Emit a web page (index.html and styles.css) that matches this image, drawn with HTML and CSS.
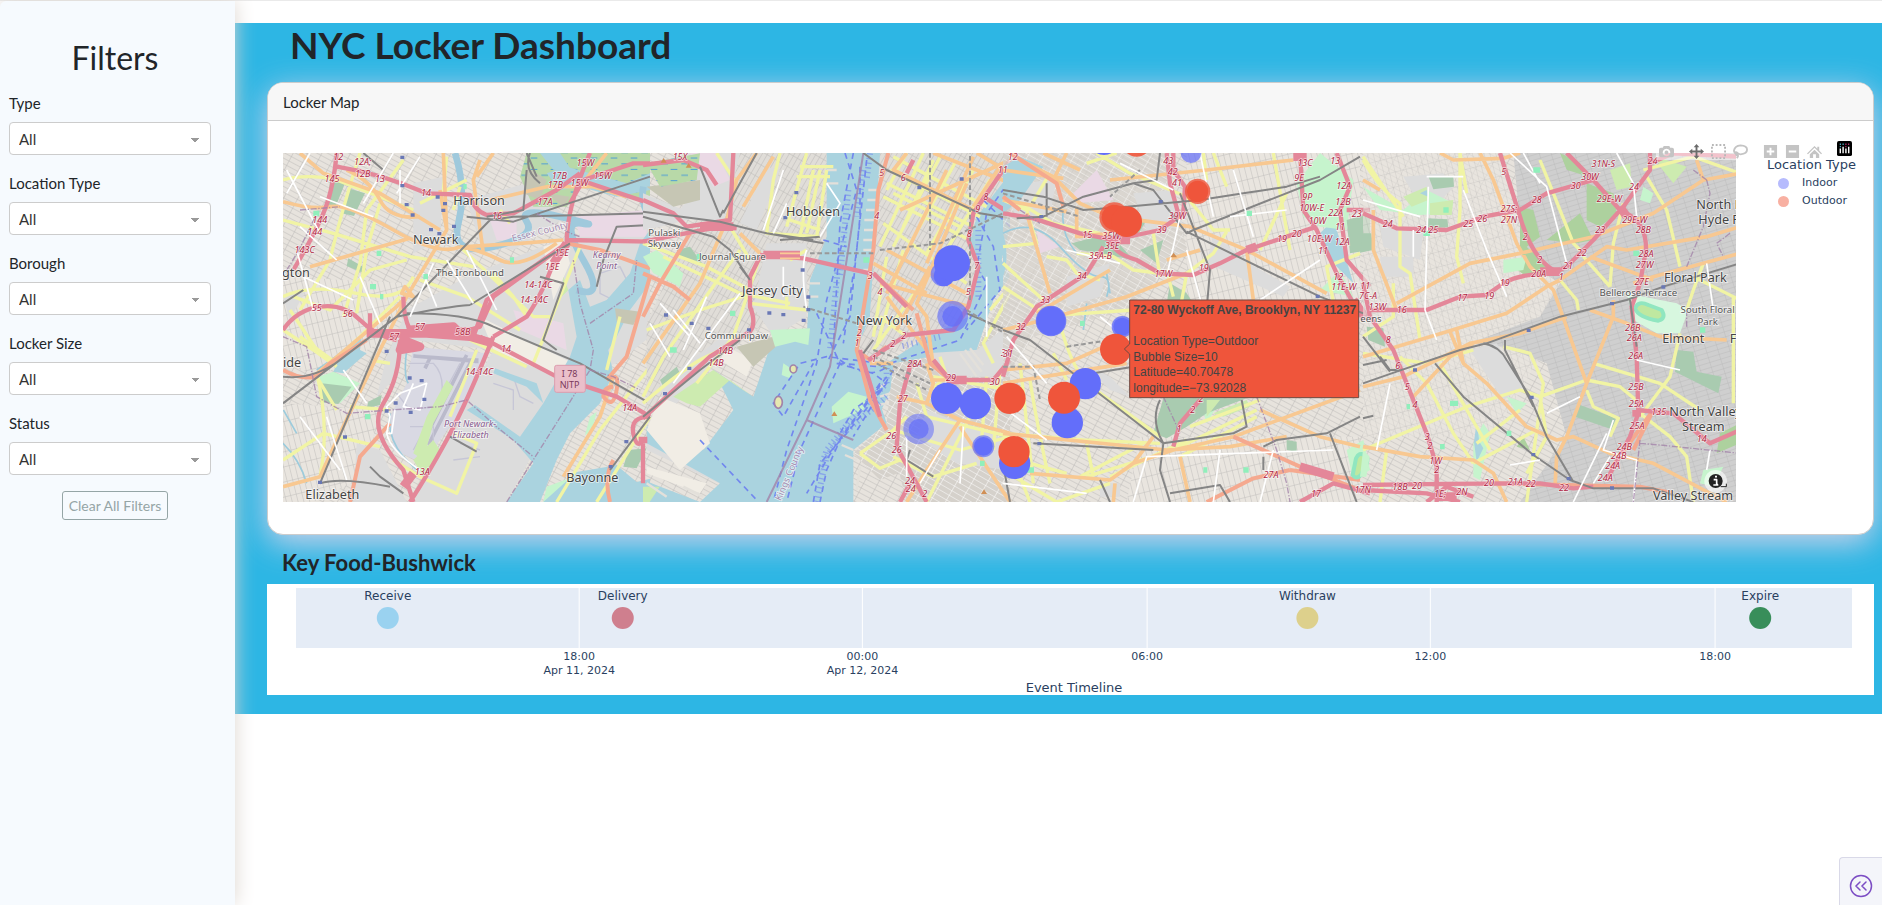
FILE: index.html
```html
<!DOCTYPE html>
<html lang="en">
<head>
<meta charset="utf-8">
<title>NYC Locker Dashboard</title>
<link rel="stylesheet" href="styles.css">
</head>
<body>
<div class="app">
  <aside class="sidebar">
    <h2 class="sidebar-title">Filters</h2>
    <div class="field"><label for="type">Type</label><select id="type"><option>All</option></select></div>
    <div class="field"><label for="loc">Location Type</label><select id="loc"><option>All</option></select></div>
    <div class="field"><label for="boro">Borough</label><select id="boro"><option>All</option></select></div>
    <div class="field"><label for="size">Locker Size</label><select id="size"><option>All</option></select></div>
    <div class="field"><label for="status">Status</label><select id="status"><option>All</option></select></div>
    <button class="clear" type="button">Clear All Filters</button>
  </aside>
  <main class="main">
    <h1 class="title">NYC Locker Dashboard</h1>
    <section class="card">
      <header class="card-header">Locker Map</header>
      <div class="card-body">
        <svg class="map" viewBox="9 9 4359 1047" preserveAspectRatio="xMinYMid slice" role="img" aria-label="Locker map">
          <defs>
            <pattern id="g1" width="38" height="15" patternUnits="userSpaceOnUse" patternTransform="rotate(28)"><rect width="38" height="15" fill="#e7e3dd"/><path d="M0 0H38M0 0V15" stroke="#bdbbb9" stroke-width="3"/></pattern>
            <pattern id="g2" width="17" height="44" patternUnits="userSpaceOnUse" patternTransform="rotate(-14)"><rect width="17" height="44" fill="#e9e5df"/><path d="M0 0H17M0 0V44" stroke="#c0bebb" stroke-width="3"/></pattern>
            <pattern id="g3" width="34" height="15" patternUnits="userSpaceOnUse" patternTransform="rotate(-17)"><rect width="34" height="15" fill="#cfcfcf"/><path d="M0 0H34M0 0V15" stroke="#b3b3b3" stroke-width="2"/></pattern>
            <pattern id="g4" width="40" height="16" patternUnits="userSpaceOnUse" patternTransform="rotate(30)"><rect width="40" height="16" fill="#d5d1cb"/><path d="M0 0H40M0 0V16" stroke="#fff" stroke-width="3"/></pattern>
            <pattern id="g5" width="14" height="36" patternUnits="userSpaceOnUse" patternTransform="rotate(30)"><rect width="14" height="36" fill="#e0ddd8"/><path d="M0 0H14M0 0V36" stroke="#bdbbb8" stroke-width="3"/></pattern>
            <pattern id="marsh" width="60" height="34" patternUnits="userSpaceOnUse"><rect width="60" height="34" fill="#b8d9a8"/><path d="M4 8H24M32 24H52" stroke="#4a9bd8" stroke-width="3"/></pattern>
          </defs>
          <rect x="9" y="9" width="4359" height="1047" fill="url(#g1)"/>

          <!-- Newark, Elizabeth, Kearny -->
          <g>
            <path fill="url(#g2)" d="M9 380L380 400 330 560 120 680 9 640ZM9 760L300 780 250 980 100 1056H9Z"/>
            <path class="ind" d="M380 480L560 380 860 260 1110 230V560L1010 640 880 680 830 780 680 1056H400L640 600 400 570 330 700 290 740 320 620ZM560 150L740 100 860 200 700 300 600 280ZM230 880L300 900 380 1056H220ZM400 100l90-20-10 190-80 40zM9 440l70-20-50 90z"/>
            <path class="pink" d="M700 480L850 520 860 600 720 540ZM880 200L1100 180V260H900ZM630 210h80v60h-60z"/>
            <path class="sand" d="M600 500l120 60 240 120-60 30-260-110zM790 290l60-20 20 70-50 110z"/>
            <path class="air" d="M400 590L620 610 560 760 430 940 340 900 330 800 380 700Z"/>
            <path class="runway" d="M400 618L595 634M450 624L435 655M560 615L415 905M575 630L445 885M590 625V640M400 618l190 14"/>
            <path class="taxi" d="M385 640H460Q500 680 480 760L470 780M390 830H460V900M350 730l40 50 70-10M540 640L400 900M700 680l20 60 40 20M640 700l60 20v60M540 880l60 20M520 930l80-10M960 370l60-20 30 60-50 40-40-20z"/>
            <path class="green2" d="M500 690l20 20-60 110-30 110-30-20 40-110zM400 930l60-60 20 30-50 80zM850 380l15 40-20 20z"/>
            <path class="green" d="M115 680L160 665 240 700 180 760 120 720ZM800 1010l80-30 60 76H790ZM930 800l20-15-15 60-20 10z"/>
            <path class="park" d="M205 115L255 130 222 198 185 190ZM150 90l45 10-30 75-22-8ZM205 325l52 30-5 15-52-22ZM125 700l90 10-40 52-55-5ZM265 755l40-20-5 30-40 10ZM1045 900l55-5-30 60-40-5Z"/>
            <path class="water" d="M1110 240V400L1050 480 1010 560 985 600 1000 670 960 760 870 850 830 930 780 1056H680L760 940 700 870 560 780 585 765 720 860 790 760 740 710 640 670 645 655 770 700 790 760 870 620 890 560 865 420 900 390 930 470 980 450 1050 370 1080 280Z"/>
            <path class="water" d="M160 665L190 600 245 565 240 600 260 610 190 670ZM790 1056l100-90 120-20 60 50 40-10v70z"/>
            <path fill="url(#marsh)" d="M740 9H1110V160L1040 140 900 110 860 170 760 170 720 80Z"/>
            <path class="water" d="M860 50L1040 100 1110 70V120L1010 140 900 110 840 120 800 70ZM780 9h60l40 60-60-10z"/>
            <path class="sand2" d="M740 50l60 40-20 60-50-20zM1005 475l75 10-20 40-50-10zM800 130l70 10-20 30z"/>
            <g class="river"><path d="M525 9Q560 120 535 220T640 290 740 215 840 200 905 220 910 330 890 420" /><path d="M1090 110Q1080 160 1110 200"/></g>
            <path class="stream" d="M9 880Q60 930 80 1000M110 660Q200 600 240 560M330 790Q320 860 370 920L410 960M380 600Q370 680 385 700M50 850L10 780"/>
            <path class="sec" d="M9 210L160 250 390 320 580 350M9 90Q80 70 170 90L400 180M240 9Q180 200 150 330L60 480M40 440L150 480 270 360 380 330M9 440Q90 400 230 430T400 380M110 670Q150 830 120 980M9 930L130 850 300 890M330 640L280 632M300 160L260 300 230 490M370 30L260 180 240 340 190 500M420 390L560 440 720 540M540 290L760 500 810 500M900 290L760 640M640 370L700 440 740 500M420 160l140-70M570 570L740 650M590 600L510 800M520 850L590 880 530 1030 420 980 340 930M660 180L690 220M830 1056L960 840 1110 650M60 560L170 640M360 440L240 560 110 680"/>
            <path class="sec" d="M9 540L100 600 170 650M170 780l-60-100M210 770L330 780M500 20L490 120M540 110L520 180M30 480L110 600M950 1056L1110 800M1020 500L980 660"/>
            <path class="pri" d="M60 9L130 70 300 130 480 240M9 155Q100 180 150 170T340 240 540 290M480 120L500 240 380 440 300 600 180 850 120 980 9 1010M90 350L390 265M200 60Q270 90 300 150T420 200M490 9L500 240M600 30L580 90 610 310M540 290Q600 300 660 330T830 280M560 290L720 280 850 270M630 150L800 110 940 110 1040 140M980 9L900 110M1000 680L960 800 850 980M640 9L590 80M100 680L350 470 380 440M400 440l-35-10 10-20z"/>
            <path class="trunk" d="M9 660Q60 690 110 680L150 640 260 570M330 820L240 920 210 1056M1110 380L1040 620 980 690M860 280L960 300 1110 355M1000 930Q970 980 990 1056M980 690q40-30 30 30t-40 20q0-30 30-30"/>
            <path class="mot" d="M170 9Q160 120 130 190T40 360M170 50Q300 70 440 130L570 135Q580 180 620 195L700 190 830 120 900 70M860 280Q860 170 930 9M860 280L620 450 580 560M860 280L640 440 600 530 540 550M860 270L1110 275M830 310Q790 430 740 500L640 560M600 560L830 680 1010 740 1110 800M640 560Q560 760 500 870T390 1056M360 570Q360 680 310 760T370 960L400 1056M370 440Q370 500 390 540M9 540Q50 480 120 470T240 510 350 570M270 490V560M870 160L910 90 1000 60 1060 40H1110M900 90L1110 160M1110 800Q1050 800 1060 850T1090 870"/>
            <path class="motw" d="M260 550L440 550 570 560 640 580M380 540L520 530 550 560M370 570l50 20-60 10zM500 545h80M860 280l-40 60M400 970l-30 40"/>
            <path class="rail" d="M9 760L350 500 630 210 700 200 1110 190M120 1000L330 500M120 1000Q180 980 330 1010M350 500Q500 470 570 465M380 490Q560 490 640 530L900 640 1110 760M780 100Q730 60 750 9M740 60L730 180 620 200M560 200L700 215 1110 80M1110 225L1010 230 970 330 950 410M250 9L310 60M9 680Q100 690 180 630M570 465L870 280M990 960L1110 800M780 380L850 400 790 570 830 600M270 950L300 980 370 1030M9 460L70 420M510 860L590 905M740 9L770 80"/>
            <path class="wht" d="M340 9L250 160M420 20L350 130M280 200L120 140M360 60V160M460 340L390 500M560 300L650 480M60 230L170 330M50 300L100 480M240 380L300 520M140 800L200 990M60 800L180 960M420 960Q330 900 320 850L330 800 320 770 360 730 440 700 420 780 370 770 400 700M320 850h15l10-70M20 60L120 250M90 9L20 130M430 370L470 470M500 330L580 460M70 380L220 450M190 660L260 760"/>
            <path class="bound" d="M9 560L80 590 110 740 200 790 330 780 480 770 560 750 650 830 760 920M680 1056L930 660 940 600 900 460 880 330M930 660L1000 680 1080 720M60 180L180 170M20 360Q60 300 110 190M770 190Q860 250 900 260M930 520L1060 430 1070 330"/>
          </g>

          <!-- Jersey City, Hudson, lower Manhattan -->
          <g transform="translate(1080 0)">
            <path fill="url(#g5)" d="M260 9H560V270L510 390 350 540 150 700 20 800V520L120 300Z"/>
            <path class="ind" d="M130 9L300 9 250 220 100 200 180 110ZM9 130L180 200 60 230 9 240ZM380 280H500V500L400 560 340 470ZM60 700l200-150 20 40-200 200zM20 860L300 960 260 1010 20 900ZM380 50l40 10-30 80-40 100-50-20z"/>
            <path class="pink" d="M150 9H230L270 90 220 110Z"/>
            <path class="water" d="M560 9H740L715 120 690 500 650 600 690 640 720 760 740 820 640 900 640 1056H9V990L180 1056 240 1000 20 880V830L150 800 190 900 280 780 220 660 340 740 400 560 500 560 510 390 560 260Z"/>
            <path class="water" d="M1110 70L1060 130 1010 200 985 290 1015 350 985 500 860 560 740 640 690 650 720 790 760 700 870 620 1010 600 1060 450 1110 380 1085 330 1110 230Z"/>
            <path class="sand" d="M60 740L180 790 210 880 120 960 20 840ZM20 950L200 1000 180 1030 20 970ZM260 590l80 40-20 50-80-50z"/>
            <path class="sand2" d="M290 590L420 555 430 570 340 650ZM20 110l160-20v60l-80 20z"/>
            <path fill="url(#marsh)" d="M20 40L180 10 170 90 60 110Z"/>
            <path class="green2" d="M100 740L220 660 340 740 270 690 180 770 140 760ZM9 1010h50l-30 46H9z"/>
            <path class="green" d="M575 770L625 725 680 740 670 780 580 820ZM9 320L50 300 130 370 120 410 40 370ZM390 540l120-5-5 50-40-10-60 15zM430 640l30 20-10 25-25-10z"/>
            <path class="green2" d="M980 1056L1060 940 1110 990V1056Z"/>
            <path class="park" d="M110 300L150 290 190 345 120 325ZM60 690l50-40 10 20-50 40z"/>
            <path d="M720 9H1110V70L1010 200 985 290 1015 350 985 500 860 560 700 640 650 600 690 500Z" fill="url(#g5)"/>
            <path d="M760 640L870 620 1010 600 1110 380V1056H800L740 820Z" fill="url(#g4)"/>
            <path d="M640 910L740 820 800 960 720 990 650 920Z" fill="url(#g4)"/>
            <path class="ind" d="M860 610L1010 600 1110 520V680H900ZM860 780l240 90v90l-150-20-120-80z"/>
            <g class="piers"><path d="M715 120h-30M712 150h-30M708 180h-30M705 210h-32M702 240h-30M700 270h-30M696 300h-26M690 360h-20M560 60h30M560 100h35M560 190h25M510 400h30M510 440h25M740 700l-30 15M750 730l-30 10M740 760l-25 5M640 900l-35-15M650 930l-35-15M660 950l-10 70M960 610l50 70M975 600l50 65M990 595l40 50M20 1000l60 40M130 1010l60 30"/></g>
            <g class="ferry"><path d="M615 9L650 120 560 450 530 640 440 900 400 1056M640 9L600 220 580 600 600 640 480 900 440 1056M660 50V200L630 500 560 640M680 30L650 300 610 580M590 640L700 670 740 700 620 850 540 940 520 1056M600 630Q700 700 750 640M740 680L600 870 560 960 540 1056M720 700L590 880 500 1030M760 660L640 860M720 640L560 620 480 640 400 760 430 800 520 640M180 870L350 1050M530 490L600 640 720 650 960 570 1040 400 1010 350 1040 190 1110 90M1010 200L1060 290 1080 420 980 540M720 720L640 780 600 850M1030 150L1110 230M550 270L620 290"/></g>
            <g class="ferry dense"><path d="M670 60L650 200M625 120L600 380M740 640V700L640 800 560 900 540 960M1015 240V450M900 560L780 590M740 740L610 850 560 920 530 1056M690 10l-10 80M595 340L570 600"/></g>
            <path class="bound solid" d="M670 9L570 650 500 810 380 1056M500 810L640 870"/>
            <path class="sec" d="M420 9L400 90 380 250 540 260M500 9L440 230M480 50H580M470 80H570M540 60L500 250M560 60L530 260M520 60l-40 200M450 210L540 240M70 320L300 430 450 460M9 280L200 350 330 420M360 320L280 560 170 700M9 760Q150 640 200 620T300 560M270 230L330 330M330 460L500 480M440 440V470M500 300L450 330M340 430L180 480 20 540M230 9L290 100M300 300L240 380 70 620 9 740"/>
            <path class="sec" d="M750 60L1020 200M760 20L1040 170M740 100L1000 230M730 140L990 270M800 9L740 120M850 9L720 290M900 20L760 290M950 30L800 300M1000 60L860 310M1050 90L900 330M730 220L980 400M740 320L700 560M790 300L710 590M830 420L700 600M720 500L800 560M1110 430L1030 580 1060 640M900 620L920 680 870 720M880 30l-90 200M760 130l200 100"/>
            <path class="sec" d="M760 840L960 900 1110 860M830 700L860 800 1110 860M660 910L760 840 800 800M660 910L720 955 780 930M1040 680L1020 930M1080 660L1060 900M880 680L1110 720M760 920L880 980 1010 940M860 1056L1000 780M1110 410L1050 480"/>
            <path class="pri" d="M350 9L290 90 260 210M260 210L180 400 9 640M310 170L400 20M300 250L360 310M740 300L980 430M980 100L830 460 860 500 880 650M920 60L740 430M720 400L990 470M870 350L770 540M860 640L880 700 860 760 960 810 1110 850M960 810L860 960 800 1056M870 690H930M1000 20L860 340M1080 50L1000 170M700 340L860 430M740 440L860 600M770 740L860 760M960 830L1110 1056M1110 30L780 180M1010 9l100 60M880 9l230 90M800 9L760 60 1000 180M760 640L690 640"/>
            <path class="trunk" d="M745 9L715 120 700 300 650 600 690 750 740 840M9 370L100 410 150 450M150 250L60 400 9 500M830 490L870 640 930 690M650 600L690 630 740 590M700 370L820 480"/>
            <path class="mot" d="M9 45L130 30 200 60 230 105M9 275L240 230 290 235M9 150L100 190 140 230 270 210 280 9M360 315L490 325 690 370M360 320L330 380V470Q350 520 330 545L210 620 80 740 9 805M700 370L800 470M9 880V1000M685 630L800 555 940 540 985 470 1015 350 985 270 1000 190 1110 30M815 630L780 760 770 890 860 1056M780 1056L810 1000M930 690H1060L1110 630M660 600L720 800M880 630L930 690M1030 140L1110 190M800 70l20-40"/>
            <path class="motw" d="M370 315H480M180 230H280M9 860v20M920 690h60"/>
            <path class="orangein" d="M420 310h60M420 325h60"/>
            <path class="rail" d="M180 50L240 200 250 180M9 185L240 215 380 250 550 280M9 200L220 260 270 300 330 390M9 800L180 660 300 570M350 9L250 190M520 270L380 250M670 9L740 60 1020 190 1110 205M980 490L1110 545M300 350L330 390M420 270l120-10M700 570L670 610M810 900L800 930 880 980"/>
            <path class="subway" d="M510 310H700M490 470L650 520M700 600L880 660M700 620L870 700M710 640L860 720M980 480L1110 560M720 300L900 280 1110 180M870 9V300M990 450V9"/>
            <path class="wht" d="M100 480L180 580M200 440L130 600M300 430L100 700M440 160L400 250M500 300Q480 350 500 480M430 350V440M560 100L600 160 540 260M1040 380V560M970 830L960 1000M60 460L150 560M30 520L90 620M430 60l-60 180M800 860v120M900 900l-60 100"/>
            <g class="vil"><ellipse cx="415" cy="757" rx="12" ry="18"/><ellipse cx="460" cy="657" rx="10" ry="12"/></g>
          </g>

          <!-- Brooklyn and Queens -->
          <g transform="translate(2160 0)">
            <path fill="url(#g4)" d="M9 9H500L560 300 380 480 100 560 9 700Z" opacity=".75"/>
            <path fill="url(#g2)" d="M560 9H1080V460H560ZM420 860H1080V1056H380Z"/>
            <path class="ind" d="M9 120L170 80 150 200 60 220ZM200 380L330 340 300 440 200 470ZM400 130L520 120 550 230 440 240ZM250 640l80 40 60 60-60-20zM640 250l90 80 140 80-20 30-230-100zM300 1000h60v40h-60z"/>
            <path class="pink" d="M220 130L290 60 340 150 230 160ZM110 240l70 50-60 20z"/>
            <path class="water" d="M9 50L60 20 130 50 60 150 9 190ZM9 250Q30 320 9 380ZM960 250L1000 210 1030 300 1060 400 1000 340Z"/>
            <path class="green" d="M890 100L960 9 1060 90 1040 240 960 230 910 200ZM960 420l60-60 40 80zM600 750l80-30-60 100zM1040 900l50-30 20 90-50 30z"/>
            <path class="park" d="M215 280L330 250 400 330 300 310 240 300ZM390 200L440 210 410 260 360 270ZM420 300L490 270 470 340ZM510 400L560 430 580 460H500ZM460 850L490 745H740L620 790 560 830 500 865ZM1040 210L1110 190V300L1050 310ZM860 870l30 5v30l-30-5z"/>
            <path class="green2" d="M620 750l40 0-40 50zM640 790l100-40 10 20-80 30z"/>
            <path class="stream" d="M9 250Q100 200 180 290T300 380 320 440M190 180Q180 250 230 310M260 460L250 540M320 370l10 60"/>
            <path class="sec" d="M9 150L80 180 110 280 9 290M60 160L160 220 300 250M150 70L90 170M260 40L350 9M290 9L390 70 560 140 640 240 690 240M680 245L640 310 560 370 540 480M9 410L100 470 180 520M9 340L130 450M230 310L340 320 400 360 560 380M140 320L200 330 230 370 300 390M90 690Q110 820 150 1000M60 640L100 1000M110 500L400 480M180 520Q210 640 260 700L480 860M160 610L200 690M9 850L250 870 480 880M9 940H90L200 970M240 980L430 880M260 880L280 980M330 980L560 870M260 980L520 900 770 780M540 920L770 800M570 830L780 750M500 360L520 440M460 250L480 380M620 90L610 9M820 9L870 300M860 130L780 300M1080 310L980 350 1020 560M60 980L90 1056M9 960L170 1056 330 1000M640 9L680 110"/>
            <path class="pri" d="M9 150L200 185M60 30L160 80 240 160 330 200 570 230 740 300 980 430M560 370L380 440 130 510 9 540M110 490L330 360M9 660L200 640 380 560M9 700L380 640M230 170V260L330 250M90 970L330 990 400 940 520 900 700 860 1080 720M9 850L500 900 690 890 860 860M740 300L760 450M540 920L570 1056M345 1000L340 1056M780 780L960 860 1080 890M9 60L190 85M200 9L160 90M330 90L620 60 880 30M500 330L600 300M130 9L240 60M80 190L150 430M460 860L400 940"/>
            <path class="trunk" d="M30 9L170 100 190 170M700 860L900 950 1080 1020M620 1056L760 985 870 960M870 960L1080 990M9 140L60 180"/>
            <path class="mot" d="M9 190L100 205 240 250 340 270 480 240 550 190 555 110 520 60V9M330 270Q340 310 410 330L480 370 580 375 660 340 740 300 860 260 950 230M310 290L260 370 110 470 40 570 9 680M900 9L910 180 950 240 1010 370 1060 460M1010 9L1050 110 1020 180 1040 330 1110 410M520 890L540 820 600 750M1040 180H1110M900 1056L1000 1000 1110 1030M500 9L510 100 540 210"/>
            <path class="motw" d="M320 270H390M880 20h40M900 950l100 30M740 300l30-10M1060 450l40 60"/>
            <path class="rail" d="M50 205L130 200 250 140 400 100 460 120 560 250 580 240 960 90 1080 20M9 120L130 140 250 180 380 170 600 150 730 130 860 110 960 80M400 100L470 90 480 9M560 245L960 440 1090 490M140 200V100M540 130L630 360 620 480M9 540L90 570 490 880M490 880L700 850 740 830 725 750M490 880Q450 810 480 750M490 880L480 960 510 1056M790 890L830 870 980 850 1080 800M990 850L1070 1056M100 880L460 900M9 940L30 1056M280 670L400 650M300 990L330 1056M510 1030L660 1005 690 1056M790 920v40"/>
            <path class="subway" d="M9 130L240 200M200 590L330 570M9 650H100L120 750M420 60L330 140"/>
            <path class="wht" d="M600 9L640 200M360 40L520 120M200 300L360 340M540 200L500 380M610 480L560 300M960 330L780 450M300 500L540 700M20 560L140 700M20 780L140 870M400 1056L440 920 1000 900M660 900L640 1056M780 1056L820 900M9 1000L260 1030M700 60L760 260M690 200L860 180"/>
            <path class="bound" d="M490 740L540 850M770 740L830 900 860 1000 870 1056M60 180l60 40"/>
            <path class="track" d="M1068 925q10-20 25-10t5 30l-15 30q-15 15-25 0z"/>
          </g>

          <!-- Eastern Queens and Nassau -->
          <g transform="translate(3240 0)">
            <path fill="url(#g2)" d="M9 9H420L500 340 600 400 540 620 400 860H9Z" opacity=".6"/>
            <path fill="url(#g3)" d="M460 9H1140V1056H480L620 860 560 640 430 590 330 580 540 500 600 400 490 330Z"/>
            <path class="ind" d="M60 230L190 240 180 330 70 290ZM130 80L250 70 280 110 200 200ZM330 600l80-20 80 130-60 40zM60 320h100v60H70z"/>
            <path class="park" d="M205 78L280 80 282 110 220 118ZM200 205L262 208 265 232 205 235ZM950 600L1000 605 1010 665 1085 680 1075 730 945 665ZM660 765L768 805 755 838 645 800ZM9 250l25 0 5 50-39 8zM20 530l50 5 5 55-50-20z"/>
            <path class="wood" d="M480 170L520 180 540 260 500 290 580 370 520 380 480 300ZM680 100L760 130 770 190 720 230 680 210ZM460 350L520 300 560 360 500 380ZM560 270L660 190 700 270 650 280ZM600 9l60 30 20 40-60-20zM1080 850l60-30v60l-70 30zM490 860l20 40-40-10z"/>
            <path class="green" d="M9 110L130 180 200 120 280 160 270 190 180 195 60 180ZM430 330L500 320 490 360 430 370ZM850 110l30 20-10 30-30-10zM340 880l30-60 20 30-30 140-20-10zM440 740l60 20-30 30zM1030 960l60-10-30 60-40-10zM9 900l20 20-10 60H0z"/>
            <path class="green2" d="M210 160L280 150 275 195 210 195ZM750 60L810 40 815 110 770 120ZM890 20L980 50 940 100 900 50ZM130 140l70-30 5 40-50 20z"/>
            <path fill="#d7f7df" d="M800 430L950 460 985 480 960 550 890 550 820 510Z"/>
            <path class="water" d="M350 815l8 60 12 20-20 40-8-60zM180 130l20-10 5 20z"/>
            <path class="track" d="M825 475q10-25 40-10l40 15q15 25-10 32-60-10-70-37z"/>
            <path class="sec" d="M9 30Q60 120 120 160V350L150 370 180 570M300 9V180L290 320 310 400M9 20L130 200M540 30L560 80 640 280 660 300M790 160L760 280 750 410M860 80L920 180 960 350M670 320L750 410M600 390L650 450 655 480M9 610L200 640 340 600M430 590L510 610 550 700 500 1056M300 9L320 130M120 620L200 700 280 850 340 940M240 640L390 900M9 900L320 770 480 720 540 740 680 690M680 690L780 710 840 760M700 640L900 700 1020 780M960 550L930 680 840 800M680 720L700 770 775 805 750 860M530 840L340 940M840 790L930 860 980 920 1000 1056M1120 440V760M1030 340L1000 420 980 480M1000 380L1140 450M80 900L60 1056M480 780L350 880M9 560L100 500V400M850 60L1000 20 1140 70M540 740L560 860 500 970"/>
            <path class="pri" d="M9 620L260 545 440 490 560 410 600 390 740 290 800 300 1040 260 1140 230M110 460L330 340 480 310 700 260 880 190 1030 90 1140 70M240 9L280 30 430 25 480 9M360 9L400 90 470 280 510 350 580 420 680 700 620 860 590 920 585 1010M690 320L880 390M9 710L130 680 330 580 480 550 620 500M270 545L310 640 380 700 500 830 590 870 640 860 750 910 880 940 1100 1056M760 450V500L680 700M690 480L800 520 900 560 1100 570M9 890L180 920 340 930 400 970 440 1056M820 400L880 380 1140 310M40 180V300L110 480M160 740L270 620 340 580M1010 30L1030 90M9 90L60 120M290 540L310 640"/>
            <path class="trunk" d="M400 1000L840 1010 940 1030M750 960L880 780 820 900"/>
            <path class="mot" d="M9 190L110 235 260 240 370 200 480 180 560 130 700 90M420 9L480 200Q520 340 600 370M620 9L700 90 780 180M870 9V60L790 170 700 270 620 350 580 370Q480 370 430 400L380 435 300 440 200 480H30M9 400L30 500 100 600 200 850 230 950V1056M800 190Q860 220 858 300L840 400 815 470 830 620 835 790 810 860 740 990M9 1020L200 1030 300 1056M9 1005Q300 1000 540 1000L640 1015 700 1010M830 780L940 790 1050 880 1140 840M870 40L940 10 1140 20M200 1056L260 1010 340 1040"/>
            <path class="motw" d="M780 170l20 30M540 365h60M230 1040h60M830 800v-20"/>
            <path class="rail" d="M9 700L110 665 300 600 380 580 600 500 800 450 910 410 1140 340M60 620L90 660H120M9 560L90 665M225 640L310 740 520 915 630 990 700 1015 880 1015 1000 1056M370 580Q420 590 440 630L510 740 560 860 640 995M435 570V600L520 770M9 645L80 630M9 805L40 797M810 450L830 590"/>
            <path class="wht" d="M200 80H310M205 110L195 480 230 570M310 120L380 300 440 440M450 9L560 110 620 340M540 100L490 9M770 9L820 100 830 200M90 700L50 900M160 240V320M9 150L180 200M740 850L640 1056M760 810L730 900 830 930 820 1056M1040 340L1060 480M830 630L960 660M450 945L540 930M660 740L560 790M750 920L700 1000M1050 900L1040 960"/>
            <path class="bound" d="M1040 90L1050 130 1030 230 980 350M1000 60L1040 90M1110 250L1070 280 1090 320M840 870L820 1056M840 880L900 885 1140 910M980 480V530"/>
          </g>
          <g class="greens"><path d="M100 190h18M270 410h18M255 800h16M300 440h10M430 380h14M1170 600h20M1350 490h16M1750 330h18M2240 960h22M2400 520h14M2900 190h16M2890 960h16M3490 180h16M3430 250h20M3510 760h24M3680 850h14M3760 60h20M4060 310h18M4260 540h16M1250 320h16M690 330h12M2100 940h14M2330 820h18M3480 890h14M3380 770h10M2770 960h12M550 110h10M290 310h14"/></g>
          <g class="stops"><path d="M367 17v10M367 102v10M380 159v10M398 190v10M473 136v10M495 156v10M490 176v10M522 224v10M453 234v10M478 246v10M389 679v10M425 687v10M433 743v10M347 754v10M320 778v10M392 782v10M195 856v10M120 992v10M320 599v10M1039 870v10M992 945v10M1549 123v10M1516 198v10M1568 355v10M1585 436v10M1585 474v10M1571 506v10M1468 484v10M1510 489v10M1407 535v10M1235 515v10M1285 530v10M1158 490v10M1228 650v10M1155 726v10M2045 82v10M1918 108v10M2642 150v10M2284 195v10M2278 876v10M3113 434v10M3405 655v10M3746 536v10M3996 456v10M4150 406v10M3755 737v10M3760 909v10M3866 981v10M3996 1009v10"/></g>
          <g class="peaks"><path d="M1142 38l9-14 9 14zM1217 53l9-14 9 14zM1654 798l9-14 9 14zM2103 1032l9-14 9 14zM2671 322l10-14 10 14z"/></g>

          <g class="exit">
            <text x="175" y="30">12</text><text x="248" y="46">12A;</text><text x="248" y="80">12B</text><text x="300" y="96">13</text><text x="156" y="96">145</text><text x="119" y="220">144</text><text x="104" y="254">144</text><text x="74" y="310">143C</text><text x="438" y="138">14</text><text x="651" y="206">16</text><text x="795" y="165">17A</text><text x="838" y="88">17B</text><text x="826" y="115">17B</text><text x="898" y="108">15W</text><text x="916" y="47">15W</text><text x="968" y="87">15W</text><text x="845" y="319">15E</text><text x="816" y="361">15E</text><text x="775" y="413">14-14C</text><text x="762" y="458">14-14C</text><text x="110" y="482">55</text><text x="203" y="502">56</text><text x="343" y="569">57</text><text x="420" y="541">57</text><text x="548" y="555">58B</text><text x="678" y="607">14</text><text x="598" y="675">14-14C</text><text x="1049" y="783">14A</text><text x="427" y="974">13A</text>
            <text x="1200" y="30">15X</text><text x="1336" y="613">14B</text><text x="1308" y="647">14B</text><text x="1805" y="78">5</text><text x="1790" y="207">4</text><text x="1771" y="388">3</text><text x="1800" y="436">4</text><text x="1738" y="558">2</text><text x="1731" y="588">1</text><text x="1782" y="636">1</text><text x="1838" y="592">2</text><text x="1871" y="566">2</text><text x="1904" y="650">28A</text><text x="2013" y="694">29</text><text x="2144" y="704">30</text><text x="2177" y="618">31</text><text x="1868" y="756">27</text><text x="1834" y="866">26</text><text x="1850" y="909">26</text><text x="1890" y="1001">24</text><text x="1892" y="1027">24</text><text x="1934" y="1040">2</text><text x="2065" y="436">5</text><text x="2090" y="358">7</text><text x="2068" y="260">8</text><text x="2093" y="187">9</text><text x="2117" y="150">8</text><text x="2168" y="70">11</text><text x="1870" y="92">6</text>
            <text x="2198" y="30">12</text><text x="2422" y="264">15</text><text x="2496" y="266">35W,</text><text x="2496" y="298">35E</text><text x="2461" y="327">35A-B</text><text x="2405" y="388">34</text><text x="2296" y="458">33</text><text x="2222" y="541">32</text><text x="2184" y="620">31</text><text x="2665" y="42">43</text><text x="2678" y="76">42</text><text x="2691" y="109">41</text><text x="2692" y="208">39W</text><text x="2645" y="249">39</text><text x="2650" y="380">17W</text><text x="2771" y="364">19</text><text x="3006" y="276">19</text><text x="3050" y="262">20</text><text x="3075" y="49">13C</text><text x="3057" y="94">9E</text><text x="3082" y="149">9P</text><text x="3095" y="182">10W-E</text><text x="3112" y="222">10W</text><text x="3118" y="275">10E-W</text><text x="3166" y="42">13</text><text x="3191" y="118">12A</text><text x="3189" y="165">12B</text><text x="3167" y="199">22A</text><text x="3230" y="202">23</text><text x="3180" y="241">11</text><text x="3186" y="286">12A</text><text x="3129" y="312">11</text><text x="3175" y="389">12</text><text x="3191" y="420">11E-W</text><text x="3256" y="416">11</text><text x="3264" y="446">7C-A</text><text x="2763" y="756">2</text><text x="2738" y="788">2</text><text x="2697" y="847">1</text><text x="2973" y="984">27A</text><text x="3108" y="1040">17</text><text x="3248" y="1028">17N</text>
            <text x="3323" y="231">24</text><text x="3424" y="249">24</text><text x="3460" y="250">25</text><text x="3565" y="230">25</text><text x="3607" y="216">26</text><text x="3687" y="187">27S;</text><text x="3687" y="218">27N</text><text x="3671" y="76">5</text><text x="3770" y="159">28</text><text x="3887" y="116">30</text><text x="3930" y="89">30W</text><text x="3970" y="50">31N-S</text><text x="4118" y="43">24</text><text x="4062" y="119">24</text><text x="3988" y="157">29E-W</text><text x="4064" y="218">29E-W</text><text x="4090" y="248">28B</text><text x="3961" y="250">23</text><text x="3905" y="318">22</text><text x="3864" y="356">21</text><text x="3844" y="389">1</text><text x="3776" y="381">20A</text><text x="3736" y="269">2</text><text x="3779" y="339">2</text><text x="3674" y="408">19</text><text x="3628" y="446">19</text><text x="3547" y="453">17</text><text x="3365" y="490">16</text><text x="3292" y="481">13W</text><text x="4098" y="321">28A</text><text x="4094" y="354">27W</text><text x="4085" y="405">27E</text><text x="4058" y="543">26B</text><text x="4063" y="572">26A</text><text x="4067" y="627">26A</text><text x="4068" y="719">25B</text><text x="4069" y="770">25A</text><text x="4071" y="837">25A</text><text x="4136" y="794">135</text><text x="4265" y="877">14</text><text x="4033" y="900">24B</text><text x="4016" y="928">24B</text><text x="3998" y="958">24A</text><text x="3976" y="994">24A</text><text x="3325" y="578">8</text><text x="3353" y="656">6</text><text x="3382" y="720">5</text><text x="3405" y="774">4</text><text x="3442" y="870">3</text><text x="3450" y="897">2</text><text x="3467" y="942">1W</text><text x="3470" y="970">2</text><text x="3480" y="1040">1E;</text><text x="3546" y="1036">2N</text><text x="3360" y="1019">18B</text><text x="3411" y="1017">20</text><text x="3627" y="1009">20</text><text x="3706" y="1005">21A</text><text x="3752" y="1012">22</text><text x="3852" y="1022">22</text>
          </g>
          <g class="county"><text x="782" y="254" transform="rotate(-14 782 254)">Essex County</text><text x="1536" y="974" transform="rotate(-67 1536 974)">Kings County</text></g>
          <g class="area"><text x="980" y="324">Kearny</text><text x="980" y="356">Point</text><text x="570" y="832">Port Newark-</text><text x="572" y="865">Elizabeth</text></g>
          <g class="shield"><rect x="824" y="646" width="92" height="81" rx="6"/><text x="869" y="682">I 78</text><text x="869" y="714">NJTP</text></g>
          <g class="town">
            <text x="597" y="164">Harrison</text><text x="467" y="281">Newark</text><text x="48" y="380">gton</text><text x="36" y="650">ide</text><text x="157" y="1046">Elizabeth</text><text x="937" y="996">Bayonne</text><text x="1599" y="199">Hoboken</text><text x="1477" y="436">Jersey City</text><text x="1812" y="526">New York</text><text class="start" x="4249" y="176">North N</text><text class="start" x="4255" y="223">Hyde P</text><text x="4246" y="397">Floral Park</text><text x="4210" y="579">Elmont</text><text class="start" x="4349" y="579">F</text><text class="start" x="4168" y="797">North Valley</text><text x="4270" y="843">Stream</text><text x="4239" y="1050">Valley Stream</text>
          </g>
          <g class="hood"><text x="570" y="378">The Ironbound</text><text x="1153" y="257">Pulaski</text><text x="1153" y="291">Skyway</text><text x="1357" y="330">Journal Square</text><text x="1369" y="566">Communipaw</text><text x="3273" y="517">eens</text><text x="4075" y="437">Bellerose Terrace</text><text x="4283" y="488">South Floral</text><text x="4283" y="524">Park</text></g>

          <g class="indoor">
            <g opacity=".7"><circle cx="1988" cy="373" r="36"/><circle cx="2733" cy="8" r="31"/></g>
            <circle cx="1992" cy="378" r="31"/><circle cx="2016" cy="340" r="54"/>
            <circle cx="2018" cy="499" r="46" opacity=".65"/><circle cx="2018" cy="499" r="31" opacity=".75"/>
            <circle cx="2000" cy="745" r="47"/><circle cx="2086" cy="761" r="47"/>
            <circle cx="1916" cy="837" r="46" opacity=".55"/><circle cx="1916" cy="837" r="30" opacity=".7"/>
            <circle cx="2110" cy="889" r="33" opacity=".7"/><circle cx="2110" cy="889" r="28"/>
            <circle cx="2313" cy="513" r="46" opacity=".85"/><circle cx="2313" cy="513" r="43"/>
            <circle cx="2527" cy="530" r="32" opacity=".8"/><circle cx="2527" cy="530" r="27"/>
            <circle cx="2416" cy="701" r="47"/><circle cx="2362" cy="818" r="47"/><circle cx="2204" cy="940" r="47"/><circle cx="2472" cy="-30" r="45"/>
          </g>
          <g class="outdoor">
            <circle cx="2507" cy="598" r="47"/><circle cx="2352" cy="743" r="48"/><circle cx="2190" cy="745" r="47"/><circle cx="2202" cy="905" r="47"/>
            <circle cx="2753" cy="124" r="38" opacity=".8"/><circle cx="2753" cy="124" r="32"/>
            <circle cx="2503" cy="202" r="45" opacity=".8"/><circle cx="2503" cy="202" r="38"/><circle cx="2540" cy="215" r="46"/><circle cx="2570" cy="-25" r="45" opacity=".9"/>
          </g>
          <g class="tip">
            <path d="M2533 597L2549 582V450H3236V743H2549V612Z"/>
            <text class="b" x="2560" y="492">72-80 Wyckoff Ave, Brooklyn, NY 11237</text>
            <text x="2560" y="584">Location Type=Outdoor</text><text x="2560" y="632">Bubble Size=10</text><text x="2560" y="677">Latitude=40.70478</text><text x="2560" y="725">longitude=−73.92028</text>
          </g>
          <g class="info"><circle class="halo" cx="4307" cy="994" r="34"/><circle cx="4307" cy="993" r="21"/><path d="M4301 989h9v15h4M4300 1005h15M4305 980h6" stroke="#fff" stroke-width="5" fill="none"/><path d="M4322 1010h17v-9" stroke="#222" stroke-width="3" fill="none"/></g>
        </svg>
        <div class="legend">
          <div class="legend-title">Location Type</div>
          <div class="legend-item"><i class="dot in"></i>Indoor</div>
          <div class="legend-item"><i class="dot out"></i>Outdoor</div>
        </div>
        <div class="modebar">
          <button aria-label="Download plot"><svg viewBox="0 0 16 16"><path fill-rule="evenodd" d="M5 2h6l1 2h2q2 0 2 2v6q0 2-2 2H2q-2 0-2-2V6q0-2 2-2h2zM8 5a4 4 0 1 0 .01 0zM8 7a2 2 0 1 1-.01 0z"/></svg></button>
          <button class="gap active" aria-label="Pan"><svg viewBox="0 0 16 16"><path d="M8 0l3 3.500H9V7h3.500V5L16 8l-3.500 3V9H9v3.500h2L8 16l-3-3.500h2V9H3.500v2L0 8l3.500-3v2H7V3.500H5z"/></svg></button>
          <button aria-label="Box select"><svg viewBox="0 0 16 16"><path fill="none" stroke="#b8b8b8" stroke-width="2" stroke-dasharray="2 2" d="M1 1h14v14H1z"/></svg></button>
          <button aria-label="Lasso select"><svg viewBox="0 0 16 16"><path fill="none" stroke="#c4c4c4" stroke-width="2" d="M5 11Q1 10 1 7 2 2 8 1.500 15 2 15 6T8 11Q6 11 4 9 2 8 3 10.500T5 12Q6 13 4 15"/></svg></button>
          <button class="gap" aria-label="Zoom in"><svg viewBox="0 0 16 16"><path fill-rule="evenodd" d="M1 1h14v14H1zM7 4v3H4v2h3v3h2V9h3V7H9V4z"/></svg></button>
          <button aria-label="Zoom out"><svg viewBox="0 0 16 16"><path fill-rule="evenodd" d="M1 1h14v14H1zM4 7v2h8V7z"/></svg></button>
          <button aria-label="Reset view"><svg viewBox="0 0 16 16"><path d="M8 2l3 3V3h2v4l3 3-1 1-7-7-7 7-1-1zM8 6l5 5v4H9.500v-4h-3v4H3v-4z"/></svg></button>
          <a class="gap plotly" href="#" aria-label="Plotly"><svg viewBox="0 0 16 16"><rect width="16" height="16" rx="2" fill="#000"/><path d="M3.500 8v5M6.500 6v7M9.500 8v5M12.500 6v7" stroke="#fff" stroke-width="1.500"/><path d="M3 3.500h1M6 3.500h1M3 6h1" stroke="#67e0ff" stroke-width="1.500"/><path d="M9 3.500h1M12 3.500h1M9 6h1" stroke="#ee3d8b" stroke-width="1.500"/></svg></a>
        </div>
      </div>
    </section>
    <h3 class="subtitle">Key Food-Bushwick</h3>
    <section class="timeline">
      <svg width="100%" height="111" role="img" aria-label="Event Timeline">
        <rect class="plot" y="4" width="100%" height="60"/>
        <g class="grid"><line x1="18.2%" x2="18.2%" y1="4" y2="64"/><line x1="36.4%" x2="36.4%" y1="4" y2="64"/><line x1="54.7%" x2="54.7%" y1="4" y2="64"/><line x1="72.9%" x2="72.9%" y1="4" y2="64"/><line x1="91.2%" x2="91.2%" y1="4" y2="64"/></g>
        <circle cx="5.9%" cy="34" r="11" fill="#9ad2f0"/><circle cx="21%" cy="34" r="11" fill="#cf7f8e"/><circle cx="65%" cy="34" r="11" fill="#ddd08c"/><circle cx="94.1%" cy="34" r="11" fill="#388e5a"/>
        <g class="ev"><text x="5.9%" y="16">Receive</text><text x="21%" y="16">Delivery</text><text x="65%" y="16">Withdraw</text><text x="94.1%" y="16">Expire</text><text class="axis" x="50%" y="108">Event Timeline</text></g>
        <g class="tick"><text x="18.2%" y="76">18:00</text><text x="18.2%" y="90">Apr 11, 2024</text><text x="36.4%" y="76">00:00</text><text x="36.4%" y="90">Apr 12, 2024</text><text x="54.7%" y="76">06:00</text><text x="72.9%" y="76">12:00</text><text x="91.2%" y="76">18:00</text></g>
      </svg>
    </section>
  </main>
</div>
<button class="drawer" aria-label="Open panel"><svg viewBox="0 0 24 24"><circle cx="12" cy="12" r="10.500"/><path d="M11 8l-4 4 4 4M17 8l-4 4 4 4"/></svg></button>
</body>
</html>
```
FILE: styles.css
```css
* { box-sizing: border-box; }
body { margin: 0; background: #fff; color: #212529; font: 15px/24px Lato, sans-serif; }
.app { display: flex; min-height: 100vh; border-top: 1px solid #eaeaea; }
.sidebar { position: relative; z-index: 1; display: flex; flex-direction: column; flex: 0 0 235px; padding: 33px 24px 0 9px; background: #f6fafe; border-top-left-radius: 6px; box-shadow: 0 0 20px #dcd5cf; }
.sidebar-title { margin: 0 0 9px; padding-left: 10px; text-align: center; font-size: 32px; line-height: 48px; font-weight: 400; }
.field { display: flex; flex-direction: column; gap: 7px; margin-bottom: 16px; }
.field label { height: 24px; line-height: 24px; }
.field select { width: 100%; height: 33px; padding: 0 9px; border: 1px solid #ccc; border-radius: 4px; color: #333; font: 15px Lato, sans-serif; appearance: none; background: conic-gradient(from -45deg at 50% 100%, #999 90deg, transparent 0) right 11px top 15px / 8px 4px no-repeat, #fff; }
.clear { align-self: center; margin-left: 10px; padding: 0 6px; height: 29px; color: #95a5a6; background: none; border: 1px solid #95a5a6; border-radius: 3px; font: 14px Lato, sans-serif; }
.main { flex: 1; min-width: 0; align-self: flex-start; margin-top: 22px; padding: 0 8px 19px 32px; background: #2db6e4; }
.title { margin: 0 0 15px 23px; font-size: 37px; line-height: 44px; font-weight: 700; }
.card { border: 1px solid #ccc; border-radius: 16px; background: #fff; box-shadow: 0 8px 32px #d3d3ea; }
.card-header { padding: 7px 15px 6px; background: #f7f7f7; border-bottom: 1px solid #ccc; border-radius: 15px 15px 0 0; }
.card-body { position: relative; display: flex; gap: 31px; padding: 32px 15px; }
.subtitle { position: relative; margin: 15px 0 9px 15px; font-size: 22px; line-height: 25px; font-weight: 700; }
.map { flex: 1; min-width: 0; height: 349px; overflow: hidden; }
.legend { flex: 0 0 91px; padding-top: 3px; color: #2a3f5f; font: 11px/18px "DejaVu Sans", sans-serif; white-space: nowrap; }
.legend-title { font-size: 13px; }
.legend-item { display: flex; align-items: center; gap: 13px; padding-left: 11px; }
.dot { width: 11px; height: 11px; border-radius: 50%; }
.dot.in { background: #b6bbfd; }
.dot.out { background: #f8b0a2; }
.modebar { position: absolute; top: 20px; right: 17px; display: flex; align-items: center; background: rgba(255,255,255,.5); height: 19px; }
.modebar button, .modebar a { display: flex; width: 22px; height: 18px; padding: 2px 3px; border: 0; background: none; fill: #c4c4c4; }
.modebar svg { width: 15px; height: 15px; }
.modebar .gap { margin-left: 8px; }
.modebar .active { fill: #6b6b6b; }
.modebar .plotly { align-self: flex-start; padding-top: 0; }
.timeline { padding: 0 22px 0 29px; background: #fff; }
.timeline svg { display: block; overflow: visible; fill: #2a3f5f; font-family: "DejaVu Sans", sans-serif; text-anchor: middle; }
.timeline .plot { fill: #e5ecf6; }
.grid line { stroke: #fff; }
.ev { font-size: 12px; }
.axis { font-size: 13px; }
.tick { font-size: 11px; }
.drawer { position: fixed; right: 0; bottom: 0; width: 43px; height: 48px; padding: 16px 8px 8px; background: #f4f5fa; border: 1px solid #d9d9e8; border-width: 1px 0 0 1px; border-radius: 4px 0 0 0; }
.drawer svg { display: block; width: 24px; margin: 0 auto; fill: none; stroke: #7c4dc4; stroke-width: 1.5; stroke-linecap: round; }

.map path { stroke-linejoin: round; }
.water { fill: #aad3df; }
.ind { fill: #dcdcdc; }
.pink { fill: #ead9e5; }
.sand { fill: #f1ede5; }
.sand2 { fill: #c6c6b4; }
.air { fill: #d9d9e3; }
.green { fill: #c6f4cd; }
.green2 { fill: #cdebb0; }
.park { fill: #a9cbb0; }
.wood { fill: #add19e; }
.runway, .taxi, .stream, .river path, .sec, .pri, .trunk, .mot, .motw, .rail, .wht, .bound, .subway, .ferry path, .piers path, .orangein, .track, .greens path, .stops path { fill: none; }
.runway { stroke: #babacb; stroke-width: 11; }
.taxi { stroke: #c6c6d6; stroke-width: 4; }
.stream { stroke: #9ccbdc; stroke-width: 5; }
.river path { stroke: #9fc9dc; stroke-width: 20; }
.sec { stroke: #f1f4a4; stroke-width: 10; }
.pri { stroke: #f8c891; stroke-width: 11; }
.trunk { stroke: #f5a98f; stroke-width: 12; }
.mot { stroke: #e48799; stroke-width: 13; }
.motw { stroke: #e48799; stroke-width: 26; }
.orangein { stroke: #f9cb95; stroke-width: 5; }
.rail { stroke: #858585; stroke-width: 6; }
.subway { stroke: #999; stroke-width: 6; stroke-dasharray: 14 8; }
.wht { stroke: #fff; stroke-width: 5; }
.bound { stroke: #a283a9; stroke-width: 4; stroke-dasharray: 18 5 4 5; opacity: .8; }
.bound.solid { stroke-width: 6; stroke-dasharray: none; }
.ferry path { stroke: #7287ee; stroke-width: 5; stroke-dasharray: 18 14; }
.ferry.dense path { stroke-width: 18; stroke-dasharray: 4 10; opacity: .6; }
.piers path { stroke: #e3e0da; stroke-width: 7; }
.track { fill: #bfe8a0; stroke: #90e6c0; stroke-width: 12; }
.vil ellipse { fill: #e6e8b0; stroke: #a283a9; stroke-width: 5; }
.greens path { stroke: #90efbb; stroke-width: 16; }
.stops path { stroke: #6a78b5; stroke-width: 12; }
.peaks { fill: #d08f55; }
.map text { font-family: "Noto Sans", sans-serif; text-anchor: middle; paint-order: stroke; stroke: rgba(255,255,255,.65); stroke-width: 5px; }
.exit text { fill: #b02643; font-size: 27px; font-style: italic; stroke-width: 4px; }
.town text { fill: #444; font-size: 38px; }
.map .start { text-anchor: start; }
.hood text { fill: #555; font-size: 29px; }
.area text { fill: #8a6090; font-size: 27px; font-style: italic; }
.county text { fill: #a58db0; font-size: 28px; }
.shield rect { fill: #eabfca; stroke: #dd9dae; stroke-width: 3; }
.map .shield text { fill: #7b3a5c; font-size: 27px; stroke: none; }
.indoor { fill: #636efa; }
.outdoor { fill: #ef553b; }
.tip path { fill: #ef553b; stroke: #6f4a42; stroke-width: 3; }
.map .tip text { fill: #444; font: 36px "Liberation Sans", Arial, sans-serif; text-anchor: start; stroke: none; }
.map .tip .b { font-weight: 700; }
.info { fill: #222; }
.info .halo { fill: rgba(255,255,255,.6); }
```
